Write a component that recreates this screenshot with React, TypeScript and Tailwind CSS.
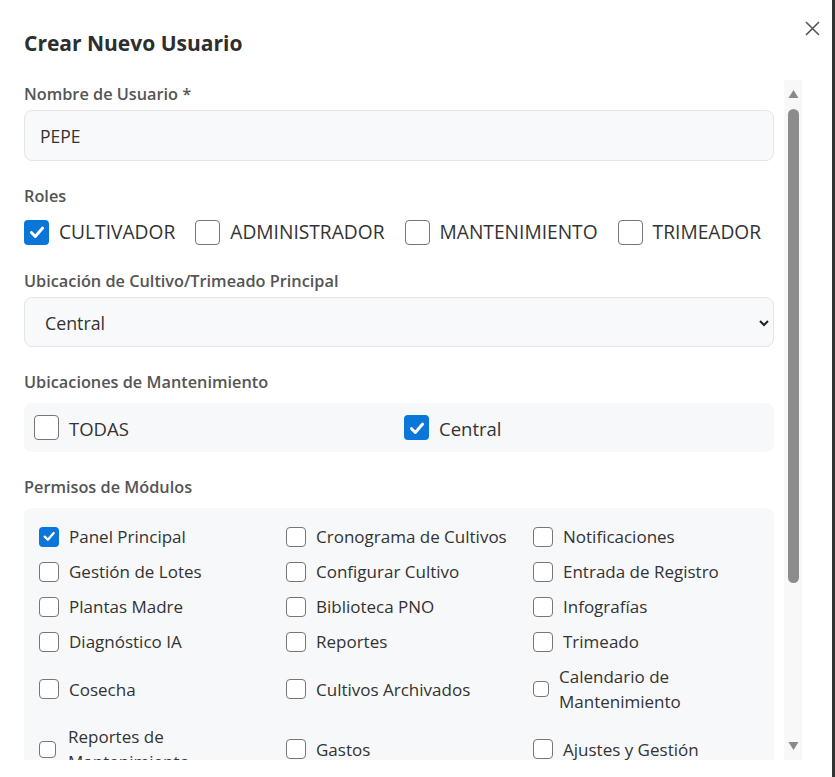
import React from "react";

const FONT = { fontFamily: '"Open Sans", "Noto Sans", sans-serif' };

function Box({ checked, size = 24 }: { checked?: boolean; size?: number }) {
  return (
    <div
      className={
        "shrink-0 flex items-center justify-center rounded-[4px] " +
        (checked ? "bg-[#0b76da]" : "bg-white border border-[#767676]")
      }
      style={{ width: size, height: size }}
    >
      {checked && (
        <svg width={size * 0.72} height={size * 0.72} viewBox="0 0 16 16">
          <path d="M3 8.5 L6.5 12 L13 4.5" fill="none" stroke="white" strokeWidth="2.6" strokeLinecap="round" strokeLinejoin="round" />
        </svg>
      )}
    </div>
  );
}

function Perm({ label, checked, size = 20, gap = 10 }: { label: React.ReactNode; checked?: boolean; size?: number; gap?: number }) {
  return (
    <div className="flex items-center" style={{ gap }}>
      <Box checked={checked} size={size} />
      <span className="text-[17px] leading-[25px] text-[#333]">{label}</span>
    </div>
  );
}

const LABEL = "block text-[16.3px] leading-[20px] font-semibold text-[#555]";

export default function App() {
  return (
    <div className="w-[835px] h-[777px] flex bg-[#333]" style={FONT}>
      <div className="w-[832px] h-[777px] bg-white relative flex flex-col">
        <div className="h-[80px] shrink-0 pl-6 pt-[28px]">
          <h2 className="text-[21px] leading-[30px] font-bold text-[#2e2e2e]">Crear Nuevo Usuario</h2>
        </div>
        <button className="absolute left-[805px] top-[21px] w-[15px] h-[15px]">
          <svg width="15" height="15" viewBox="0 0 15 15">
            <path d="M1 1 L14 14 M14 1 L1 14" stroke="#555" strokeWidth="1.6" />
          </svg>
        </button>
        <div className="ml-6 w-[778px] h-[680px] shrink-0 flex">
          <div className="flex-1 overflow-hidden pr-[10px]">
            <label className={LABEL + " mt-[4px]"}>Nombre de Usuario *</label>
            <div className="mt-[6px] h-[51px] rounded-[8px] border border-[#e3e5e8] bg-[#f8f9fa] flex items-center pt-[2px] px-[15px] text-[17.5px] text-[#333]">PEPE</div>

            <label className={LABEL + " mt-[25px]"}>Roles</label>
            <div className="mt-[14px] flex items-center h-[24px]">
              {[
                ["CULTIVADOR", true],
                ["ADMINISTRADOR", false],
                ["MANTENIMIENTO", false],
                ["TRIMEADOR", false],
              ].map(([l, c]) => (
                <div key={l as string} className="flex items-center gap-[10px] mr-[20px]">
                  <Box checked={c as boolean} size={25} />
                  <span className="text-[19.2px] text-[#333]">{l as string}</span>
                </div>
              ))}
            </div>

            <label className={LABEL + " mt-[27px]"}>Ubicación de Cultivo/Trimeado Principal</label>
            <div className="mt-[6px] h-[50px] rounded-[8px] border border-[#e3e5e8] bg-[#f8f9fa] flex items-center justify-between pt-[2px] pl-[20px] pr-[3px] text-[17.8px] text-[#333]">
              <span>Central</span>
              <svg width="12" height="8" viewBox="0 0 12 8">
                <path d="M2 2 L6 6 L10 2" fill="none" stroke="#222" strokeWidth="2" />
              </svg>
            </div>

            <label className={LABEL + " mt-[25px]"}>Ubicaciones de Mantenimiento</label>
            <div className="mt-[11px] h-[49px] rounded-[8px] bg-[#f7f8fa] grid grid-cols-2 gap-[10px] px-[10px] items-center">
              <div className="flex items-center gap-[10px]">
                <Box size={25} />
                <span className="text-[18.5px] pt-[3px] text-[#333]">TODAS</span>
              </div>
              <div className="flex items-center gap-[10px]">
                <Box checked size={25} />
                <span className="text-[18.5px] pt-[3px] text-[#333]">Central</span>
              </div>
            </div>

            <label className={LABEL + " mt-[25px]"}>Permisos de Módulos</label>
            <div className="mt-[11px] rounded-[8px] bg-[#f7f8fa] pt-[16px] pb-[16px] pl-[15px] grid grid-cols-[247px_247px_1fr] gap-y-[10px] items-center">
              <Perm label="Panel Principal" checked />
              <Perm label="Cronograma de Cultivos" />
              <Perm label="Notificaciones" />
              <Perm label="Gestión de Lotes" />
              <Perm label="Configurar Cultivo" />
              <Perm label="Entrada de Registro" />
              <Perm label="Plantas Madre" />
              <Perm label="Biblioteca PNO" />
              <Perm label="Infografías" />
              <Perm label="Diagnóstico IA" />
              <Perm label="Reportes" />
              <Perm label="Trimeado" />
              <Perm label="Cosecha" />
              <Perm label="Cultivos Archivados" />
              <Perm label={<>Calendario de<br />Mantenimiento</>} size={16} gap={10} />
              <Perm label={<>Reportes de<br />Mantenimiento</>} size={17} gap={12} />
              <Perm label="Gastos" />
              <Perm label="Ajustes y Gestión" />
            </div>
          </div>
          <div className="w-[18px] h-[680px] bg-[#f8f8f8] flex flex-col items-center">
            <svg className="mt-[9px]" width="11" height="10" viewBox="0 0 11 10">
              <path d="M5.5 1 L10.5 9 L0.5 9 Z" fill="#8a8a8a" />
            </svg>
            <div className="mt-[10px] w-[11px] h-[474px] rounded-[6px] bg-[#8c8c8c]" />
            <div className="flex-1" />
            <svg className="mb-[9px]" width="11" height="10" viewBox="0 0 11 10">
              <path d="M0.5 1 L10.5 1 L5.5 9 Z" fill="#8a8a8a" />
            </svg>
          </div>
        </div>
      </div>
    </div>
  );
}
